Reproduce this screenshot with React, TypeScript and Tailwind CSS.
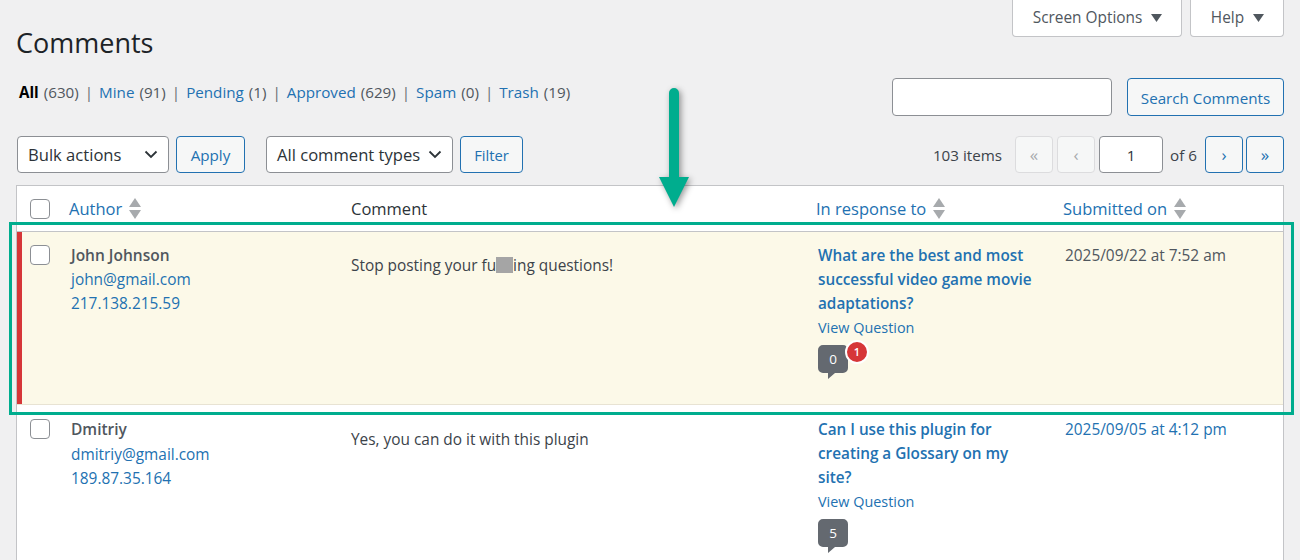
import React from 'react';

const font = "font-['Open_Sans','Noto_Sans',sans-serif]";

function SortArrows() {
	return (
		<svg width="12" height="21" viewBox="0 0 12 21" className="ml-[7px] inline-block shrink-0">
			<path d="M6 0 L12 9 L0 9 Z" fill="#a7aaad" />
			<path d="M0 12 L12 12 L6 21 Z" fill="#a7aaad" />
		</svg>
	);
}

function Chevron() {
	return (
		<svg width="14" height="9" viewBox="0 0 14 9" fill="none" stroke="#2c3338" strokeWidth="1.8">
			<path d="M1.5 1.5 L7 7 L12.5 1.5" />
		</svg>
	);
}

function Tab({ label, className }: { label: string; className: string }) {
	return (
		<div
			className={`flex h-[37px] items-center justify-center gap-[9px] rounded-b-[4px] border border-t-0 border-[#c3c4c7] bg-white pb-[1px] pl-[1px] text-[15.4px] text-[#50575e] ${className}`}
		>
			{label}
			<svg width="11" height="8" viewBox="0 0 11 8">
				<path d="M0 0 H11 L5.5 8 Z" fill="#50575e" />
			</svg>
		</div>
	);
}

function Filters() {
	const links = [
		{ name: 'All', count: '(630)', current: true },
		{ name: 'Mine', count: '(91)' },
		{ name: 'Pending', count: '(1)' },
		{ name: 'Approved', count: '(629)' },
		{ name: 'Spam', count: '(0)' },
		{ name: 'Trash', count: '(19)' },
	];
	return (
		<div className="ml-[3px] mt-[2px] flex items-center text-[15.2px] text-[#50575e]">
			{links.map((l, i) => (
				<span key={l.name} className="flex items-center">
					{i > 0 && <span className="mx-[6px] text-[#646970]">|</span>}
					<span className={l.current ? 'font-bold text-black' : 'text-[#2271b1]'}>{l.name}</span>
					<span className="ml-[5px]">{l.count}</span>
				</span>
			))}
		</div>
	);
}

function Btn({ children, className }: { children: React.ReactNode; className: string }) {
	return (
		<div
			className={`flex items-center justify-center rounded-[4px] border border-[#2271b1] bg-[#f6f7f7] text-[#2271b1] ${className}`}
		>
			{children}
		</div>
	);
}

function Select({ label, className }: { label: string; className: string }) {
	return (
		<div
			className={`flex h-[37px] items-center justify-between whitespace-nowrap rounded-[4px] border border-[#8c8f94] bg-white pl-[10px] pr-[10px] text-[16.6px] text-[#2c3338] ${className}`}
		>
			{label}
			<Chevron />
		</div>
	);
}

function PageBtn({ glyph, off }: { glyph: string; off?: boolean }) {
	return (
		<div
			className={`flex h-[37px] w-[38px] items-center justify-center rounded-[4px] border text-[17px] ${
				off
					? 'border-[#dcdcde] bg-[#f6f7f7] text-[#a7aaad]'
					: 'border-[#2271b1] bg-[#f6f7f7] text-[#2271b1]'
			}`}
		>
			{glyph}
		</div>
	);
}

function Checkbox() {
	return <div className="h-[20px] w-[20px] rounded-[4px] border border-[#8c8f94] bg-white" />;
}

function Bubble({ count, pending }: { count: string; pending?: string }) {
	return (
		<div className="relative mt-[5px] h-[34px] w-[30px]">
			<svg width="30" height="34" viewBox="0 0 30 34" className="block">
				<path
					d="M5 0 H25 A5 5 0 0 1 30 5 V23 A5 5 0 0 1 25 28 H17 L10 34 V28 H5 A5 5 0 0 1 0 23 V5 A5 5 0 0 1 5 0 Z"
					fill="#646970"
				/>
			</svg>
			<span className="absolute left-0 top-0 flex h-[28px] w-[30px] items-center justify-center text-[13.5px] text-white">
				{count}
			</span>
			{pending && (
				<span className="absolute left-[27px] top-[-5px] flex h-[24px] w-[24px] items-center justify-center rounded-full border-2 border-white bg-[#d63638] text-[11px] font-semibold text-white">
					{pending}
				</span>
			)}
		</div>
	);
}

const cols = 'grid grid-cols-[54px_280px_467px_247px_1fr]';

type RowProps = {
	name: string;
	email: string;
	ip: string;
	comment: React.ReactNode;
	question: string;
	date: string;
	count: string;
	pending?: string;
	flagged?: boolean;
};

function Row(p: RowProps) {
	return (
		<div
			className={`${cols} h-[173px] text-[15.4px] leading-[24px] ${
				p.flagged
					? 'border-b border-[#e8e3d3] bg-[#fcf9e8] pt-[11px] shadow-[inset_5px_0_0_#d63638]'
					: 'bg-white pt-[12px]'
			}`}
		>
			<div className="pl-[13px] pt-[2px]">
				<Checkbox />
			</div>
			<div>
				<div className="text-[15.5px] font-semibold text-[#50575e]">{p.name}</div>
				<div className={`${p.flagged ? 'mt-[1px]' : 'mt-[2px]'} text-[#2271b1]`}>{p.email}</div>
				<div className="text-[#2271b1]">{p.ip}</div>
			</div>
			<div className="pt-[11px] text-[#3c434a]">{p.comment}</div>
			<div className="pr-[25px]">
				<div className="text-[15.3px] font-semibold text-[#2271b1]">{p.question}</div>
				<div className="mt-[1px] text-[14.4px] text-[#2271b1]">View Question</div>
				<Bubble count={p.count} pending={p.pending} />
			</div>
			<div className={`pt-[1px] ${p.flagged ? 'text-[#50575e]' : 'text-[#2271b1]'}`}>{p.date}</div>
		</div>
	);
}

export default function App() {
	return (
		<div
			className={`${font} relative h-[560px] w-[1300px] overflow-hidden bg-[#f0f0f1] px-[16px] text-[15.2px] leading-[24px]`}
		>
			<div className="flex items-start justify-between">
				<h1 className="pt-[25px] text-[27px] leading-[36px] text-[#1d2327]">Comments</h1>
				<div className="flex gap-[8px]">
					<Tab label="Screen Options" className="w-[170px]" />
					<Tab label="Help" className="w-[94px]" />
				</div>
			</div>

			<div className="mt-[17px] flex h-[38px] items-start justify-between">
				<Filters />
				<div className="flex">
					<div className="h-[38px] w-[220px] rounded-[4px] border border-[#8c8f94] bg-white" />
					<Btn className="ml-[15px] h-[38px] w-[157px] pt-[1px]">Search Comments</Btn>
				</div>
			</div>

			<div className="mt-[20px] flex h-[37px] items-center pl-[1px]">
				<Select label="Bulk actions" className="w-[152px]" />
				<Btn className="ml-[7px] h-[37px] w-[69px]">Apply</Btn>
				<Select label="All comment types" className="ml-[21px] w-[187px]" />
				<Btn className="ml-[7px] h-[37px] w-[63px] text-[14.8px]">Filter</Btn>
				<div className="ml-auto flex items-center text-[#3c434a]">
					<span className="mr-[13px]">103 items</span>
					<PageBtn glyph="«" off />
					<span className="w-[4px]" />
					<PageBtn glyph="‹" off />
					<div className="ml-[4px] flex h-[37px] w-[64px] items-center justify-center rounded-[4px] border border-[#8c8f94] bg-white text-[#2c3338]">
						1
					</div>
					<span className="ml-[7px] mr-[7px] w-[28px] whitespace-nowrap">of 6</span>
					<PageBtn glyph="›" />
					<span className="w-[3px]" />
					<PageBtn glyph="»" />
				</div>
			</div>

			<div className="mt-[12px] border border-[#c3c4c7] bg-white">
				<div className={`${cols} h-[46px] items-center border-b border-[#c3c4c7] text-[16.5px]`}>
					<div className="pl-[13px]">
						<Checkbox />
					</div>
					<div className="-ml-[2px] flex items-center text-[#2271b1]">
						Author
						<SortArrows />
					</div>
					<div className="text-[#2c3338]">Comment</div>
					<div className="-ml-[2px] flex items-center text-[#2271b1]">
						In response to
						<SortArrows />
					</div>
					<div className="-ml-[2px] flex items-center text-[#2271b1]">
						Submitted on
						<SortArrows />
					</div>
				</div>
				<Row
					flagged
					name="John Johnson"
					email="john@gmail.com"
					ip="217.138.215.59"
					comment={
						<>
							Stop posting your fu
							<span className="inline-block h-[16px] w-[17px] translate-y-[2px] bg-[#a5a5a5]" />
							ing questions!
						</>
					}
					question="What are the best and most successful video game movie adaptations?"
					date="2025/09/22 at 7:52 am"
					count="0"
					pending="1"
				/>
				<Row
					name="Dmitriy"
					email="dmitriy@gmail.com"
					ip="189.87.35.164"
					comment="Yes, you can do it with this plugin"
					question="Can I use this plugin for creating a Glossary on my site?"
					date="2025/09/05 at 4:12 pm"
					count="5"
				/>
			</div>

			{/* annotation drawn over the screenshot */}
			<div className="absolute left-[9px] top-[222px] h-[193px] w-[1285px] border-[3px] border-[#00ad8e]" />
			<svg
				width="50"
				height="135"
				viewBox="0 0 50 135"
				className="absolute left-[649px] top-[80px] drop-shadow-[2px_2px_3px_rgba(0,0,0,0.4)]"
			>
				<path
					d="M20 13 A5 5 0 0 1 30 13 V97 H40 L25 127 L10 97 H20 Z"
					fill="#00ad8e"
				/>
			</svg>
		</div>
	);
}
